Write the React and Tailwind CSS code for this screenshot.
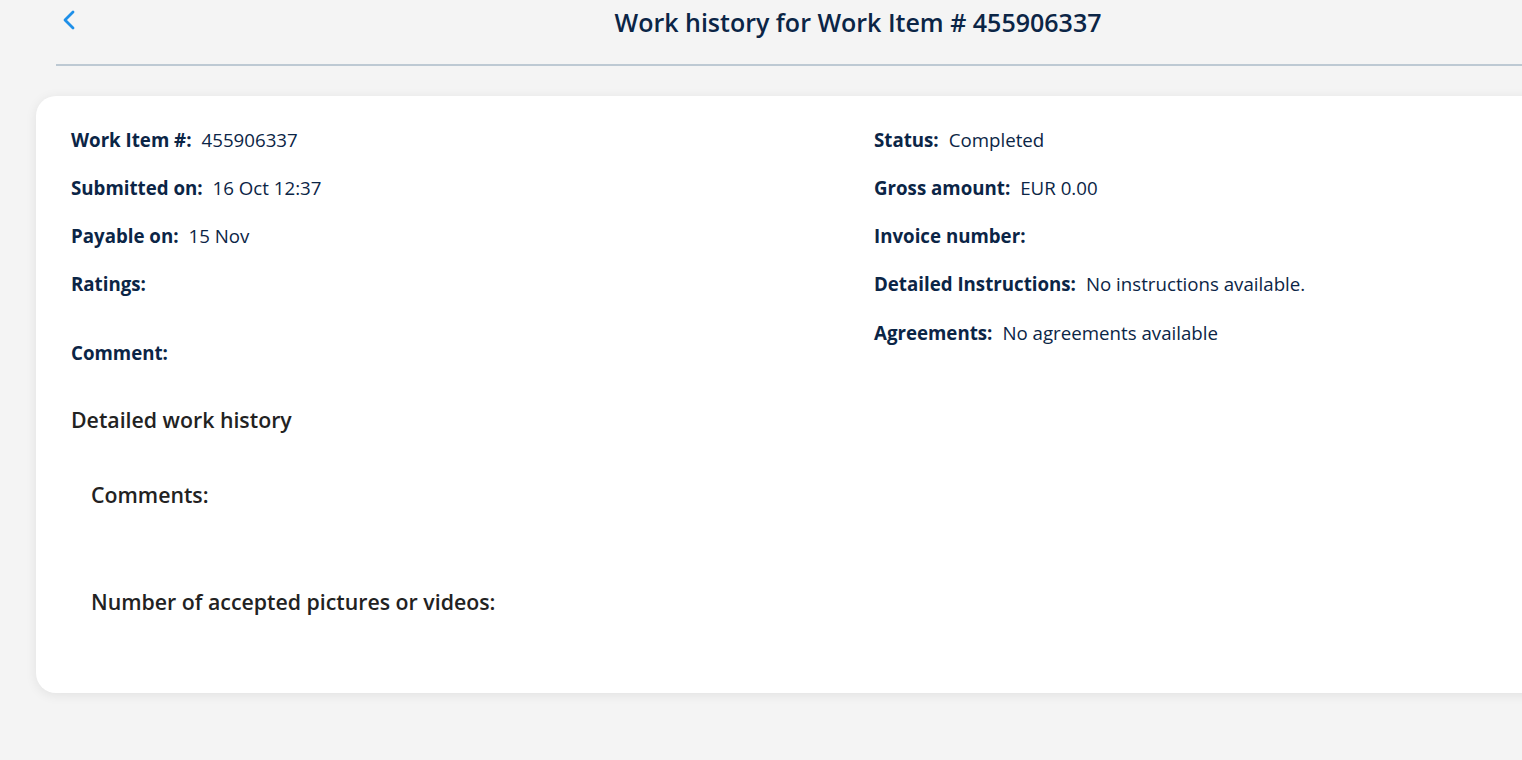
import React from "react";

function Field({ label, value, extra }) {
  return (
    <div className={extra || ""}>
      <div className="flex items-baseline leading-6 text-[18.7px]">
        <span className="font-bold text-[#0b2546]">{label}</span>
        {value ? <span className="ml-[10px] text-[#0b2546]">{value}</span> : null}
      </div>
    </div>
  );
}

export default function App() {
  return (
    <div className="min-h-screen bg-[#f4f4f4] font-['Open_Sans',_'Noto_Sans',_sans-serif] overflow-hidden">
      <div className="ml-[56px] w-[1604px]">
        <div className="relative h-[66px] border-b-2 border-[#bdc9d3]">
          <button className="absolute left-[4px] top-[8px] text-[#1e8fe8]">
            <svg width="20" height="24" viewBox="0 0 20 24" fill="none" stroke="currentColor" strokeWidth="2.8" strokeLinecap="round" strokeLinejoin="round">
              <path d="M13 4 L5 12 L13 20" />
            </svg>
          </button>
          <h1 className="pt-[5px] text-center text-[25px] leading-[34px] font-semibold text-[#0b2546]">
            Work history for Work Item # 455906337
          </h1>
        </div>
      </div>
      <div className="ml-[36px] mt-[30px] w-[1640px] rounded-[20px] bg-white shadow-[0_2px_12px_rgba(0,0,0,0.08)] pl-[35px] pt-[32px] pb-[77px]">
        <div className="grid grid-cols-[803px_1fr]">
          <div className="flex flex-col gap-6">
            <Field label="Work Item #:" value="455906337" />
            <Field label="Submitted on:" value="16 Oct 12:37" />
            <Field label="Payable on:" value="15 Nov" />
            <Field label="Ratings:" extra="pb-[21px]" />
            <Field label="Comment:" />
          </div>
          <div className="flex flex-col gap-6">
            <Field label="Status:" value="Completed" />
            <Field label="Gross amount:" value="EUR 0.00" />
            <Field label="Invoice number:" />
            <Field label="Detailed Instructions:" value="No instructions available." />
            <div className="pt-px">
              <Field label="Agreements:" value="No agreements available" />
            </div>
          </div>
        </div>
        <h2 className="mt-[41px] text-[21.3px] leading-7 font-semibold text-[#222222]">Detailed work history</h2>
        <div className="pl-[20px]">
          <h3 className="mt-[47px] text-[21.3px] leading-7 font-semibold text-[#222222]">Comments:</h3>
          <h3 className="mt-[79px] text-[21.3px] leading-7 font-semibold text-[#222222]">Number of accepted pictures or videos:</h3>
        </div>
      </div>
    </div>
  );
}
